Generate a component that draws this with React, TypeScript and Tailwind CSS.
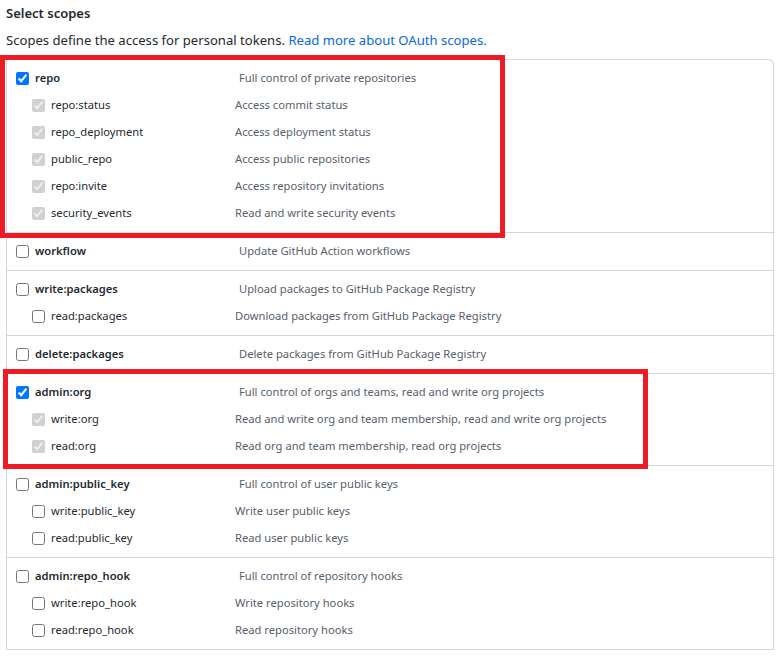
import React from 'react';

type Scope = {
  name: string;
  desc: string;
  checked?: boolean;
  children?: { name: string; desc: string }[];
};

const scopes: Scope[] = [
  {
    name: 'repo',
    desc: 'Full control of private repositories',
    checked: true,
    children: [
      { name: 'repo:status', desc: 'Access commit status' },
      { name: 'repo_deployment', desc: 'Access deployment status' },
      { name: 'public_repo', desc: 'Access public repositories' },
      { name: 'repo:invite', desc: 'Access repository invitations' },
      { name: 'security_events', desc: 'Read and write security events' },
    ],
  },
  { name: 'workflow', desc: 'Update GitHub Action workflows' },
  {
    name: 'write:packages',
    desc: 'Upload packages to GitHub Package Registry',
    children: [{ name: 'read:packages', desc: 'Download packages from GitHub Package Registry' }],
  },
  { name: 'delete:packages', desc: 'Delete packages from GitHub Package Registry' },
  {
    name: 'admin:org',
    desc: 'Full control of orgs and teams, read and write org projects',
    checked: true,
    children: [
      { name: 'write:org', desc: 'Read and write org and team membership, read and write org projects' },
      { name: 'read:org', desc: 'Read org and team membership, read org projects' },
    ],
  },
  {
    name: 'admin:public_key',
    desc: 'Full control of user public keys',
    children: [
      { name: 'write:public_key', desc: 'Write user public keys' },
      { name: 'read:public_key', desc: 'Read user public keys' },
    ],
  },
  {
    name: 'admin:repo_hook',
    desc: 'Full control of repository hooks',
    children: [
      { name: 'write:repo_hook', desc: 'Write repository hooks' },
      { name: 'read:repo_hook', desc: 'Read repository hooks' },
    ],
  },
];

const ScopeGroup: React.FC<{ scope: Scope }> = ({ scope }) => (
  <div className="border-b border-[#d0d7de] pt-[5px] pb-[5px]">
    {/* ligne principale */}
    <label className="flex items-center h-[27px] pl-[9px]">
      <input
        type="checkbox"
        defaultChecked={scope.checked}
        className="m-0 w-[13px] h-[13px] shrink-0"
      />
      <span className="w-[210px] pl-[6px] font-semibold text-[#24292f]">{scope.name}</span>
      <span className="text-[#57606a]">{scope.desc}</span>
    </label>
    {/* sous-scopes */}
    {scope.children?.map((c) => (
      <label key={c.name} className="flex items-center h-[27px] pl-[25px]">
        <input
          type="checkbox"
          checked={scope.checked ?? false}
          disabled={scope.checked}
          readOnly
          className="m-0 w-[13px] h-[13px] shrink-0"
        />
        <span className="w-[190px] pl-[6px] text-[#24292f]">{c.name}</span>
        <span className="text-[#57606a]">{c.desc}</span>
      </label>
    ))}
  </div>
);

export default function App() {
  return (
    <div className="relative w-[780px] h-[656px] overflow-hidden bg-white font-['Segoe_UI','Noto_Sans',sans-serif] text-[#24292f]">
      <div className="pl-[6px] pt-[3px]">
        <h3 className="text-[13px] font-semibold leading-[20px]">Select scopes</h3>
        <p className="mt-[6px] text-[13.1px] leading-[22px]">
          Scopes define the access for personal tokens.{' '}
          <a href="#" className="text-[#0969da]">Read more about OAuth scopes.</a>
        </p>
      </div>

      <div className="mt-[8px] ml-[6px] w-[768px] border border-b-0 border-[#d0d7de] rounded-tr-[6px] text-[11.2px]">
        {scopes.map((s) => (
          <ScopeGroup key={s.name} scope={s} />
        ))}
      </div>

      {/* cadres rouges d'annotation */}
      <div className="absolute left-0 top-[55px] w-[505px] h-[183px] border-[5px] border-[#ed1c24]" />
      <div className="absolute left-[3px] top-[369px] w-[645px] h-[100px] border-[5px] border-[#ed1c24]" />
    </div>
  );
}
